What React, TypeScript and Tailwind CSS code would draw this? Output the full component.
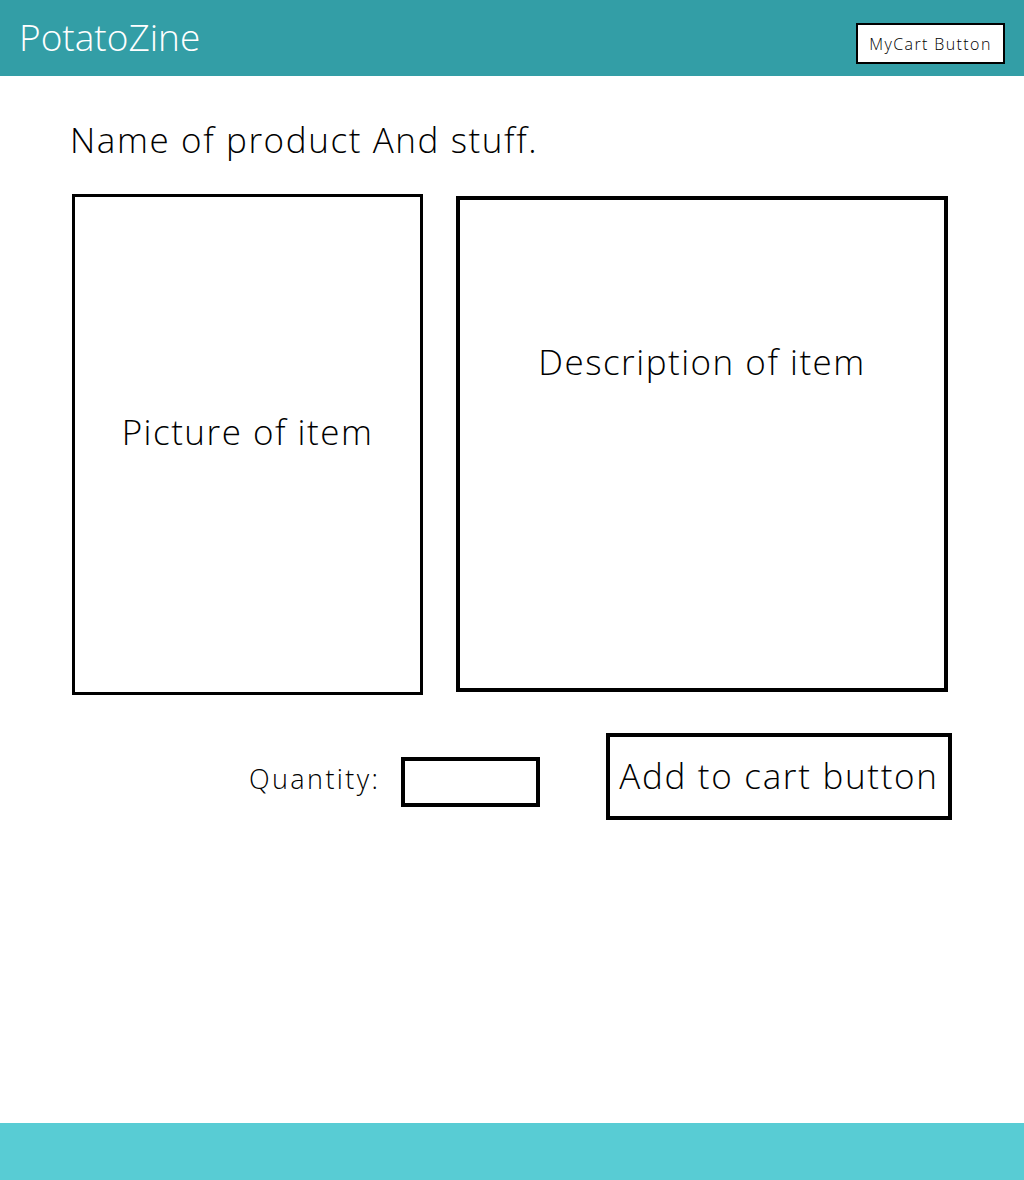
import React from "react";

export default function App() {
  const font = { fontFamily: "'Open Sans', Lato, sans-serif" };
  return (
    <div className="flex h-[1180px] w-[1024px] flex-col bg-white text-black" style={font}>
      <header className="flex h-[76px] items-start justify-between bg-[#339ea6] pl-[19px] pr-[19px]">
        <div className="mt-[15px] text-[37px] font-light leading-[44px] text-white">PotatoZine</div>
        <button className="mt-[23px] flex h-[41px] w-[149px] items-center justify-center border-2 border-black bg-white text-[16px] font-light tracking-[1.4px]">
          MyCart Button
        </button>
      </header>
      <main className="flex flex-col pl-[70px]">
        <h1 className="mt-[42px] text-[35px] font-light leading-[44px] tracking-[1.6px]">Name of product And stuff.</h1>
        <div className="mt-[32px] flex items-start">
          <div className="ml-[2px] flex h-[501px] w-[351px] items-center justify-center border-[3px] border-black pb-[24px] text-[35px] font-light tracking-[1.5px]">
            Picture of item
          </div>
          <div className="ml-[33px] mt-[2px] flex h-[496px] w-[492px] justify-center border-4 border-black pt-[136px] text-[35px] font-light tracking-[1.5px]">
            Description of item
          </div>
        </div>
        <div className="mt-[38px] flex items-center">
          <div className="ml-[179px] mt-[5px] w-[132px] text-[27px] font-light tracking-[2.4px]">Quantity:</div>
          <div className="ml-[20px] mt-[10px] h-[50px] w-[139px] border-4 border-black" />
          <button className="ml-[66px] flex h-[87px] w-[346px] items-center justify-center border-4 border-black text-[35px] font-light tracking-[1.7px]">
            Add to cart button
          </button>
        </div>
      </main>
      <footer className="mt-auto h-[57px] bg-[#58ccd4]" />
    </div>
  );
}
